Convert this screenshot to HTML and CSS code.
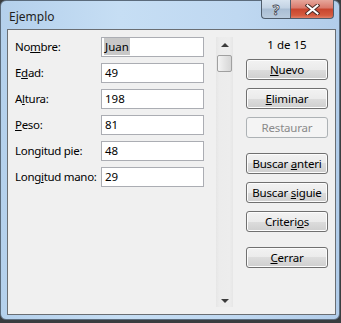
FILE: index.html
```html
<!DOCTYPE html>
<html lang="es">
<head>
  <meta charset="UTF-8" />
  <title>Ejemplo</title>
  <link rel="stylesheet" href="styles.css">
</head>
<body>

  <div class="window">
    <div class="titlebar">
      <span class="title">Ejemplo</span>
      <div class="caption-btns">
        <div class="cap help">?</div>
        <div class="cap close">
          <svg width="15" height="11" viewBox="0 0 15 11">
            <path d="M2.5 1.5 L12.5 9.5 M12.5 1.5 L2.5 9.5" stroke="#4a2a25" stroke-width="4" stroke-linecap="square"/>
            <path d="M2.5 1.5 L12.5 9.5 M12.5 1.5 L2.5 9.5" stroke="#fff" stroke-width="2" stroke-linecap="square"/>
          </svg>
        </div>
      </div>
    </div>

    <div class="client">
      <!-- record fields -->
      <div class="fields">
        <span class="lbl">No<u>m</u>bre:</span>
        <div class="box"><span class="sel">Juan</span></div>
        <span class="lbl">E<u>d</u>ad:</span>
        <div class="box">49</div>
        <span class="lbl">A<u>l</u>tura:</span>
        <div class="box">198</div>
        <span class="lbl"><u>P</u>eso:</span>
        <div class="box">81</div>
        <span class="lbl">Lon<u>g</u>itud pie:</span>
        <div class="box">48</div>
        <span class="lbl">Long<u>i</u>tud mano:</span>
        <div class="box">29</div>
      </div>

      <!-- record scrollbar -->
      <div class="scroll">
        <div class="arrow up"></div>
        <div class="thumb"></div>
        <div class="track"></div>
        <div class="arrow down"></div>
      </div>

      <!-- buttons -->
      <div class="actions">
        <div class="counter">1 de 15</div>
        <button class="btn"><u>N</u>uevo</button>
        <button class="btn"><u>E</u>liminar</button>
        <button class="btn" disabled>Restaurar</button>
        <button class="btn spaced">Buscar <u>a</u>nteri</button>
        <button class="btn">Buscar <u>s</u>iguie</button>
        <button class="btn">Criteri<u>o</u>s</button>
        <button class="btn spaced"><u>C</u>errar</button>
      </div>
    </div>
  </div>

</body>
</html>
```

FILE: styles.css
```css
body {
  margin: 0;
  background: #3a3d40;
  font-family: "Noto Sans", "Open Sans", sans-serif;
  font-size: 11.5px;
  color: #000;
}

.window {
  width: 340px;
  height: 320px;
  box-sizing: border-box;
  border: 1px solid #5b6b7c;
  border-radius: 6px;
  background: linear-gradient(to right, #b4d0ec, #c6def4 35%, #bfd8f1 70%, #b2cdea);
  padding: 0 3px 4px 6px;
  display: flex;
  flex-direction: column;
}

.titlebar {
  height: 28px;
  display: flex;
  justify-content: space-between;
  align-items: flex-start;
}

.title {
  margin: 7px 0 0 2px;
  font-size: 12px;
  color: #1e1e1e;
}

.caption-btns {
  display: flex;
  margin-top: -1px;
  margin-right: 2px;
}

.cap {
  height: 19px;
  box-sizing: border-box;
  border: 1px solid #4f5d6c;
  border-top: none;
  display: flex;
  align-items: center;
  justify-content: center;
}

.help {
  width: 29px;
  border-right: none;
  border-radius: 0 0 0 4px;
  background: linear-gradient(#d7e3ef, #c2d2e3 45%, #a9bdd3 50%, #b9cbdd);
  color: #fff;
  font-weight: bold;
  font-size: 14px;
  -webkit-text-stroke: 0.8px #3b4350;
  line-height: 19px;
}

.close {
  width: 44px;
  border-radius: 0 0 4px 0;
  background: linear-gradient(#e6a79c, #d9786a 45%, #c8452f 50%, #d45a3e 85%, #e0806a);
}

.client {
  flex: 1;
  display: flex;
  border: 1px solid #6a6e73;
  background: #f0f0f0;
}

.fields {
  display: grid;
  grid-template-columns: 86px 103px;
  grid-auto-rows: 20px;
  row-gap: 6px;
  padding: 7px 0 0 7px;
  align-self: flex-start;
}

.lbl {
  line-height: 20px;
  white-space: nowrap;
  letter-spacing: -0.3px;
}

.box {
  box-sizing: border-box;
  border: 1px solid #abadb3;
  background: #fff;
  padding: 0 3px;
  line-height: 18px;
  white-space: nowrap;
}

.sel {
  background: #c8c8c8;
  padding: 1px 1px;
  margin-left: -1px;
}

.scroll {
  width: 17px;
  height: 270px;
  margin: 7px 0 0 12px;
  background: linear-gradient(to right, #e6e6e6, #ececec 20%, #ededed 80%, #e6e6e6);
  display: flex;
  flex-direction: column;
}

.arrow {
  height: 17px;
  position: relative;
}

.arrow::after {
  content: "";
  position: absolute;
  left: 5px;
  width: 0;
  height: 0;
  border-left: 4px solid transparent;
  border-right: 4px solid transparent;
}

.arrow.up::after {
  top: 6px;
  border-bottom: 4px solid #3c3c3c;
}

.arrow.down::after {
  bottom: 4px;
  border-top: 4px solid #3c3c3c;
}

.thumb {
  height: 17px;
  box-sizing: border-box;
  margin: 1px 1px 0;
  border: 1px solid #a0a0a0;
  border-radius: 2px;
  background: linear-gradient(to right, #f4f4f4, #e4e4e4 50%, #d6d6d6);
}

.track {
  flex: 1;
}

.actions {
  width: 82px;
  margin: 7px 0 0 13px;
  display: flex;
  flex-direction: column;
  align-self: flex-start;
}

.counter {
  height: 22px;
  line-height: 16px;
  text-align: center;
}

.btn {
  height: 21px;
  margin-bottom: 8px;
  padding: 0;
  font-family: inherit;
  font-size: 11.5px;
  letter-spacing: -0.2px;
  color: #000;
  border: 1px solid #707070;
  border-radius: 3px;
  background: linear-gradient(#f2f2f2, #ebebeb 50%, #dddddd 50%, #cfcfcf);
  box-shadow: inset 0 0 0 1px #fcfcfc;
  white-space: nowrap;
}

.btn:disabled {
  color: #8a8a8a;
  border-color: #adb2b5;
  background: #f4f4f4;
  box-shadow: none;
}

.btn.spaced {
  margin-top: 7px;
}
```
